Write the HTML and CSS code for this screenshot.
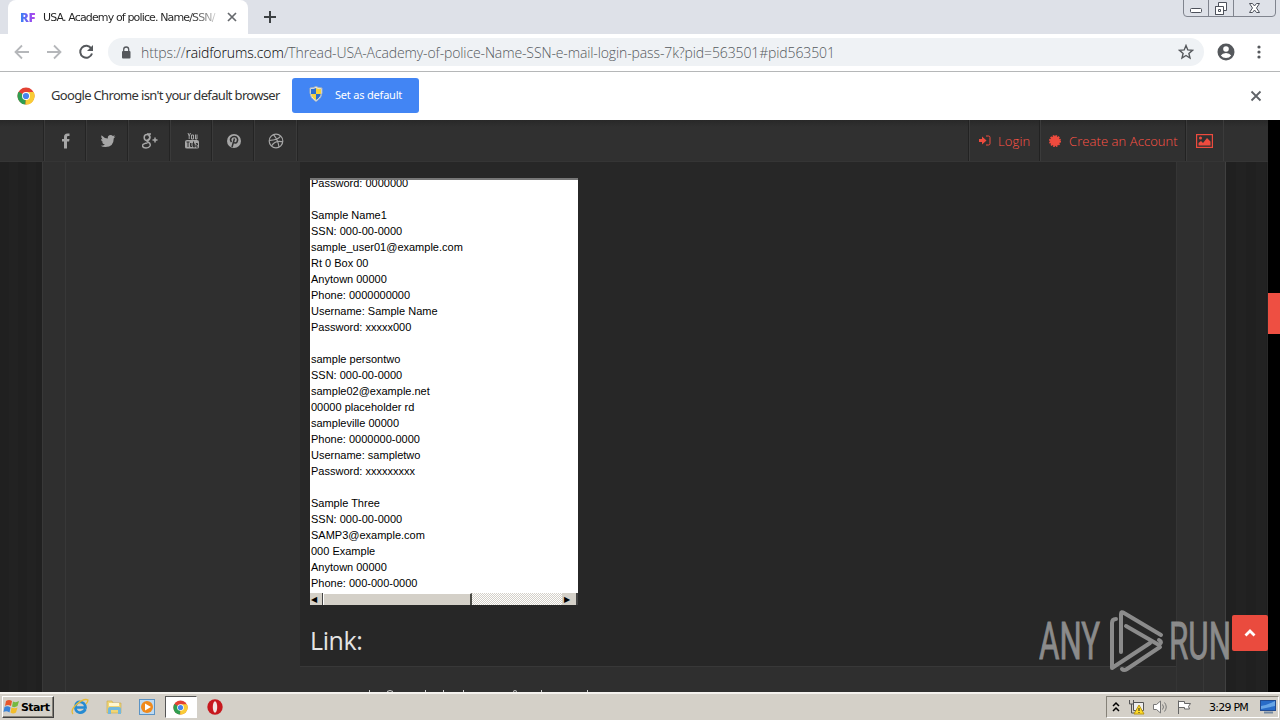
FILE: index.html
```html
<!DOCTYPE html>
<html lang="en">
<head>
<meta charset="utf-8">
<title>Browser window</title>
<link rel="stylesheet" href="styles.css">
</head>
<body>
<div class="screen">
  <header class="tabstrip">
    <div class="tab">
      <b class="favicon">RF</b><span class="tab-title">USA. Academy of police. Name/SSN/</span>
      <svg class="tab-close" width="10" height="10" viewBox="0 0 10 10"><path d="M1 1l8 8M9 1L1 9" stroke="#66696d" stroke-width="1.700"/></svg>
    </div>
    <svg class="newtab" width="12" height="12" viewBox="0 0 12 12"><path d="M6 0v12M0 6h12" stroke="#3c4043" stroke-width="2"/></svg>
    <svg class="winctl" width="94" height="18" viewBox="0 0 94 18" fill="none" stroke="#80848e">
      <path d="M.5 0v13q0 3.500 3.500 3.500h85q3.500 0 3.500-3.500V0M25.500 0v16M50.500 0v16"/>
      <g stroke="#4d515b"><rect x="7.500" y="8.500" width="11" height="4" rx="1" fill="#fff"/><path d="M35.500 2.500h8v8h-3v4h-8v-8h3z" fill="#fff"/><path d="M32.500 6.500h8v8h-8z" fill="#fff"/><path d="M35.500 9.500h2v2h-2z"/><path d="M66.500 3.500h3l2 2.500 2-2.500h3L73.500 8l3 4.500h-3l-2-2.500-2 2.500h-3l3-4.500z" fill="#fff"/></g>
    </svg>
  </header>
  <div class="toolbar">
    <svg class="nav" width="100" height="20" viewBox="0 0 100 20" fill="none" stroke-width="1.800">
      <path d="M29 10H16M22 3.500L15.500 10l6.500 6.500" stroke="#b5b7ba"/><path d="M47 10h13M54 3.500l6.500 6.500-6.500 6.500" stroke="#b5b7ba"/>
      <path d="M91.300 6.500A6 6 0 1 0 92 11.500" stroke="#55585c" stroke-width="2"/><path d="M93 3v6h-6z" fill="#55585c"/>
    </svg>
    <div class="omnibox">
      <svg width="10" height="13" viewBox="0 0 10 13"><rect x="1" y="5" width="8.500" height="7.500" rx="1" fill="#55585c"/><path d="M2.700 5.500V3.500a2.500 2.500 0 0 1 5 0v2" fill="none" stroke="#55585c" stroke-width="1.300"/></svg>
      <span class="url">https://<span class="host">raidforums.com</span>/Thread-USA-Academy-of-police-Name-SSN-e-mail-login-pass-7k?pid=563501#pid563501</span>
      <svg class="star" width="16" height="16" viewBox="0 0 16 16"><path d="M8 1.500l1.800 4.400 4.700.4-3.600 3.100 1.100 4.600L8 11.500 4 14l1.100-4.600-3.600-3.100 4.700-.4z" fill="none" stroke="#55585c" stroke-width="1.400"/></svg>
    </div>
    <svg class="avatar" width="18" height="18" viewBox="0 0 18 18"><circle cx="9" cy="9" r="8.500" fill="#55585c"/><circle cx="9" cy="6" r="2.800" fill="#fff"/><path d="M3.800 12.500q1.500-2.500 5.200-2.500t5.200 2.500Q12.300 15 9 15t-5.200-2.500z" fill="#fff"/></svg>
    <svg class="dots" width="4" height="16" viewBox="0 0 4 16" fill="#55585c"><circle cx="2" cy="3" r="1.600"/><circle cx="2" cy="8" r="1.600"/><circle cx="2" cy="13" r="1.600"/></svg>
  </div>
  <div class="infobar">
    <svg class="chrome" viewBox="0 0 18 18"><use href="#chrome"/></svg>
    <span class="info-text">Google Chrome isn't your default browser</span>
    <div class="default-btn">
      <svg width="14" height="16" viewBox="0 0 14 16"><path d="M7 .5q3 1.500 6 1.500v5q0 5-6 8.500Q1 12 1 7V2q3 0 6-1.500z" fill="#eee" stroke="#a8b3bc"/><path d="M7 2v6H2V3q3 0 5-1z" fill="#2b6fd0"/><path d="M7 2v6h5V3q-3 0-5-1zM2.200 8H7v6Q2.700 11.500 2.200 8z" fill="#f6d13a"/><path d="M7 8h4.800Q11.300 11.500 7 14z" fill="#2b6fd0"/></svg>
      <span>Set as default</span>
    </div>
    <svg class="info-close" width="12" height="12" viewBox="0 0 12 12"><path d="M1.500 1.500l9 9M10.500 1.500l-9 9" stroke="#5f6368" stroke-width="1.800"/></svg>
  </div>
  <main class="page">
    <div class="site">
      <nav class="sitebar">
        <div class="socials">
          <i><svg viewBox="0 0 16 16"><path d="M11.500.5V3H10q-1 0-1 1v2h2.500l-.4 2.500H9V15.500H6V8.500H4V6h2V4Q6 .5 9.500.5z"/></svg></i>
          <i><svg viewBox="0 0 16 16"><path d="M15.500 3.500l-1.700 1.700Q13.700 14 5.500 14 2.500 14 .7 12.700q2.500.1 4.200-1.200-2.200-.3-2.900-2.200h1.300Q1 8.300 1 6l1.400.4Q.4 4.700 1.500 2.300q2.600 3 6.300 3.200Q7.500 2 10.700 2q1.200 0 2.200 1l2-.8-1.200 1.700z"/></svg></i>
          <i><svg viewBox="0 0 16 16" fill="none" stroke="currentColor" stroke-width="1.500"><ellipse cx="5" cy="4.500" rx="2.800" ry="3"/><path d="M5 1h4M7 2q2 3-1 5-2 1 0 2 3 1.500 2 4-1 2-4 2-3.500 0-3.500-2.200T5.500 10M13 4.500v5M10.500 7h5"/></svg></i>
          <i><svg viewBox="0 0 16 16"><path d="M3 7h10q2 0 2 2v5q0 1.500-2 1.500H3q-2 0-2-1.500V9q0-2 2-2z"/><path d="M4 0l1.200 3v3M6.500 0L5.200 3M7.500 2h2v4h-2zM11.500 1.500V6H13V1.500" fill="none" stroke="currentColor"/><path d="M2.500 9h3M4 9v5M6.500 10v3.500H8V10M9.500 8.500V14h1.200v-3.500M12 10.500h1.500V12H12v2h2" fill="none" stroke="#303030"/></svg></i>
          <i><svg viewBox="0 0 16 16"><circle cx="8" cy="8" r="7"/><path d="M5.500 9Q3.500 6.500 5.500 4.500 8 2.800 10.500 4.200q2 2 .5 4.800-1.500 2-3.400.3M8.500 5.500L6 14" fill="none" stroke="#303030" stroke-width="1.500"/></svg></i>
          <i><svg viewBox="0 0 16 16" fill="none" stroke="currentColor" stroke-width="1.200"><circle cx="8" cy="8" r="6.800"/><path d="M5.500 1.700Q10 7 11 14M1.200 7.300Q9 7.500 12.700 3.200M3.500 13Q7 7 14.800 8.800"/></svg></i>
        </div>
        <div class="account">
          <a><svg width="13" height="11" viewBox="0 0 13 11"><path d="M1 4h3V1.500L8.500 5.500 4 9.500V7H1z" fill="#ee4b3e"/><path d="M8 1h2.500q1.500 0 1.500 1.500v6q0 1.500-1.500 1.500H8" fill="none" stroke="#ee4b3e"/></svg><span class="t-login">Login</span></a>
          <a><svg width="12" height="12" viewBox="0 0 12 12"><circle cx="6" cy="6" r="5" fill="#ee4b3e"/><circle cx="6" cy="6" r="5" fill="none" stroke="#ee4b3e" stroke-width="2" stroke-dasharray="1.600 1"/></svg><span class="t-create">Create an Account</span></a>
          <a><svg width="17" height="14" viewBox="0 0 17 14"><rect x=".6" y=".6" width="15.800" height="12.800" fill="none" stroke="#ee4b3e" stroke-width="1.200"/><circle cx="4.500" cy="4" r="1.500" fill="#ee4b3e"/><path d="M2.500 11.500V9L5 7l2 2 4-5 3.500 3.500v4z" fill="#ee4b3e"/></svg></a>
        </div>
      </nav>
      <div class="columns">
        <div class="edge"></div><div class="gutter"></div><div class="author"></div>
        <section class="thread">
          <article class="post">
            <div class="pane">
              <div class="lines">Password: 0000000

Sample Name1
SSN: 000-00-0000
sample_user01@example.com
Rt 0 Box 00
Anytown 00000
Phone: 0000000000
Username: Sample Name
Password: xxxxx000

sample persontwo
SSN: 000-00-0000
sample02@example.net
00000 placeholder rd
sampleville 00000
Phone: 0000000-0000
Username: sampletwo
Password: xxxxxxxxx

Sample Three
SSN: 000-00-0000
SAMP3@example.com
000 Example
Anytown 00000
Phone: 000-000-0000</div>
              <div class="hscroll"><b>◀</b><div class="thumb"></div><div class="track"></div><b>▶</b></div>
            </div>
            <h2>Link:</h2>
          </article>
          <svg class="cut" width="240" height="3" viewBox="0 0 240 3" fill="none" stroke="#d0d0d0"><path d="M9.500 1v2M27 2.500q3-2 6 0M65.500 1v2M83.500 1v2M103.500 1v2M153 2.500q2-2 4 0M181.500 1v2M227.500 1v2"/></svg>
        </section>
        <div class="right1"></div><div class="right2"></div><div class="edge-r"></div>
      </div>
      <svg class="watermark" width="196" height="66" viewBox="0 0 196 66">
        <g fill="#8b8b8b" stroke="#8b8b8b" stroke-width=".9" font-family="Roboto, sans-serif" font-size="51"><text x="0" y="50" textLength="61" lengthAdjust="spacingAndGlyphs">ANY</text><text x="130" y="50" textLength="62" lengthAdjust="spacingAndGlyphs">RUN</text></g>
        <g fill="none" stroke="#8b8b8b" stroke-width="4" stroke-linejoin="round" stroke-linecap="round"><path d="M77 10q-4 0-4 4v45l38-25M82 43V5q0-3 3-1l37 22M87 17l33 19q4-3 0-5M83 60q2 2 5 0l33-22"/></g>
      </svg>
      <div class="totop"><svg width="12" height="8" viewBox="0 0 12 8"><path d="M1.500 6.500L6 2l4.500 4.500" fill="none" stroke="#fff" stroke-width="2.800"/></svg></div>
    </div>
    <div class="scroll"><div class="scroll-thumb"></div></div>
  </main>
  <footer class="taskbar">
    <div class="start"><svg width="17" height="16" viewBox="0 0 17 16"><path d="M3 2q3-2 6 0L8 7Q5 5 2 7z" fill="#e8562a"/><path d="M10 2.500q3 1.500 6-.5l-1.500 5q-3 2-5.500.5z" fill="#75b942"/><path d="M1.500 8q3-1.500 6 .5l-1 5q-3-2-6-.5z" fill="#3a83d8"/><path d="M8.500 8.500q3 1.500 6 0l-1.500 5q-3 2-5.500 0z" fill="#f2bd2c"/></svg><span>Start</span></div>
    <div class="quick">
      <svg viewBox="0 0 18 18"><path d="M14.500 11Q12 15.500 8 14.500T4.500 8.500 9.500 4t5 5.500H5" fill="none" stroke="#268bd2" stroke-width="2.700"/><path d="M2 16Q-1 12 6 6t11-4q0 2-2 4" fill="none" stroke="#e7bb36" stroke-width="1.300"/></svg>
      <svg viewBox="0 0 18 18"><path d="M2 3h5l1 2h8v10H2z" fill="#f0d575" stroke="#c7a94c" stroke-width=".6"/><path d="M4 5h10v3H4z" fill="#fff7cf"/><path d="M3 16v-5q0-2 2-2h9q2 0 2 2v5h-3v-4H6v4z" fill="#72b8dc"/></svg>
      <svg viewBox="0 0 18 18"><rect x="1.500" y="1.500" width="15" height="15" fill="#bddaf2" stroke="#5b93c4"/><circle cx="9" cy="9" r="6" fill="#f08a1c"/><path d="M7 5.500l6 3.500-6 3.500z" fill="#fff"/></svg>
      <div class="active"><svg viewBox="0 0 18 18"><g id="chrome"><circle cx="9" cy="9" r="8.500" fill="#e34133"/><path d="M9 9L1.600 4.800A8.500 8.500 0 0 0 8.500 17.500z" fill="#2f9e50"/><path d="M9 9L8.500 17.500A8.500 8.500 0 0 0 16.600 5H9z" fill="#f9cc35"/><circle cx="9" cy="9" r="4" fill="#fff"/><circle cx="9" cy="9" r="3.100" fill="#4685ed"/></g></svg></div>
      <svg viewBox="0 0 18 18"><circle cx="9" cy="9" r="7.700" fill="#c7181e"/><ellipse cx="9" cy="9" rx="2.200" ry="5.800" fill="#f2e6e3"/></svg>
    </div>
    <div class="tray">
      <svg width="8" height="12" viewBox="0 0 8 12" fill="none" stroke="#000" stroke-width="1.500"><path d="M1 5l3-3 3 3M1 10l3-3 3 3"/></svg>
      <svg width="17" height="16" viewBox="0 0 17 16"><path d="M5.500 3.500h10v8h-10z" fill="#eee" stroke="#555"/><path d="M1.500 1v4h4V1M3.500 5v9h5" fill="none" stroke="#555"/><path d="M11 6l5 9H6z" fill="#ffdc27" stroke="#b99716"/><path d="M11 9v3M11 13v1" stroke="#222"/></svg>
      <svg width="17" height="16" viewBox="0 0 17 16" fill="none" stroke="#777"><path d="M1.500 5.500h3L8.500 2v12l-4-3.500h-3z" fill="#fff"/><path d="M10.500 5.500q2 2.500 0 5M12.500 3.500q3.500 4.500 0 9"/></svg>
      <svg width="17" height="16" viewBox="0 0 17 16" fill="#fff" stroke="#666"><path d="M2.500 15V1.500M2.500 2.500h6v2h6l-2 3 1 2.500h-5V8.500h-6"/></svg>
      <span class="clock">3:29 PM</span>
      <svg class="desk" width="16" height="14" viewBox="0 0 16 14"><rect x=".5" y=".5" width="15" height="10" fill="#286cc8" stroke="#234c91"/><path d="M1 6Q8 5 15 1v5L1 9z" fill="#68a6e6"/><path d="M4 12.500h9" stroke="#7388a0" stroke-width="2"/></svg>
    </div>
  </footer>
</div>
</body>
</html>
```
FILE: styles.css
```css
* { box-sizing: border-box; }
body { margin: 0; }
svg { display: block; flex: none; }
.screen { width: 1280px; height: 720px; display: flex; flex-direction: column; overflow: hidden; background: #fff; font-family: "Noto Sans", sans-serif; }
.tabstrip { height: 34px; flex: none; background: #dee1e8; display: flex; align-items: flex-start; }
.tab { width: 240px; height: 34px; margin-left: 8px; padding: 0 11px 0 12px; background: #fff; border-radius: 8px 8px 0 0; display: flex; align-items: center; }
.favicon { width: 23px; font: 800 13px "Open Sans", sans-serif; letter-spacing: -.4px; color: transparent; background: linear-gradient(90deg, #2f86f6, #8d4ff0 45%, #c44be8 75%); background-clip: text; -webkit-background-clip: text; }
.tab-title { width: 176px; white-space: nowrap; font: 11px "DejaVu Sans", sans-serif; letter-spacing: -.86px; color: transparent; background: linear-gradient(90deg, #222 84%, #ccc 98%); background-clip: text; -webkit-background-clip: text; }
.tab-close { margin-left: 8px; }
.newtab { margin: 11px 0 0 16px; }
.winctl { margin-left: auto; margin-right: 3px; }
.toolbar { height: 38px; flex: none; border-bottom: 1px solid #b5b7b8; display: flex; align-items: center; padding-bottom: 1px; }
.nav { margin-right: 8px; }
.omnibox { width: 1096px; height: 28px; padding: 0 10px 0 13px; border-radius: 14px; background: #eff2f5; display: flex; align-items: center; }
.url { margin-left: 10px; font: 300 14px "Open Sans", sans-serif; letter-spacing: -.12px; color: #55595d; white-space: nowrap; }
.host { color: #000; }
.star { margin-left: auto; }
.avatar { margin-left: 13px; }
.dots { margin-left: 22px; }
.infobar { height: 48px; flex: none; display: flex; align-items: center; padding: 0 18px 0 17px; }
.chrome { width: 18px; height: 18px; }
.info-text { width: 241px; margin: -2px 0 0 16px; font-size: 13px; letter-spacing: -.67px; color: #333; white-space: nowrap; }
.default-btn { width: 127px; height: 35px; margin-top: -2px; padding: 0 0 2px 17px; border-radius: 3px; background: #4285f4; color: #fff; display: flex; align-items: center; gap: 12px; font-size: 11px; letter-spacing: -.2px; white-space: nowrap; }
.info-close { margin-left: auto; }
.page { height: 572px; flex: none; display: flex; }
.site { width: 1268px; position: relative; display: flex; flex-direction: column; }
.sitebar { height: 42px; background: linear-gradient(#282828, #303030 7px); border-bottom: 1px solid #353535; display: flex; justify-content: space-between; padding: 0 44px; }
.socials, .account { display: flex; }
.socials { border-right: 1px solid #3a3a3a; box-shadow: 1px 0 #252525; }
.socials i { width: 42px; display: grid; place-items: center; border-left: 1px solid #3a3a3a; box-shadow: -1px 0 #242424; color: #a6a6a6; }
.socials svg { width: 16px; height: 16px; fill: currentColor; }
.socials svg[fill="none"] { fill: none; }
.account { border-right: 1px solid #3b3b3b; }
.account a { display: flex; align-items: center; padding: 0 8px; gap: 8px; border-left: 1px solid #3b3b3b; box-shadow: -1px 0 #222; color: #ff5346; font: 300 13px "Open Sans", sans-serif; white-space: nowrap; }
.account a:first-child { gap: 7px; }
.account a:last-child { padding: 0 10px 0 9px; }
.t-login { width: 34px; letter-spacing: .15px; }
.t-create { width: 109px; letter-spacing: .08px; }
.columns { flex: 1; min-height: 0; display: flex; background: #2f2f2f; }
.edge { width: 43px; border-right: 1px solid #383838; background: repeating-linear-gradient(90deg, #202020 0 9px, #222 9px 18px); }
.gutter { width: 23px; border-right: 1px solid #383838; }
.author { width: 234px; }
.thread { width: 876px; height: 530px; overflow: hidden; }
.post { height: 505px; padding: 16px 10px 0; background: #272727; border-bottom: 1px solid #383838; }
.pane { width: 268px; height: 427px; background: #fff; border-top: 2px solid #777; overflow: hidden; display: flex; flex-direction: column; }
.lines { height: 418px; margin-top: -5px; padding-left: 1px; flex: none; white-space: pre; overflow: hidden; font: 11px/16px "Liberation Sans", sans-serif; color: #000; }
.hscroll { height: 12px; flex: none; display: flex; background: #d4d0c8; font: 8px/14px "DejaVu Sans", sans-serif; }
.hscroll b { width: 13px; padding-right: 4px; text-align: center; border-right: 1px solid #444; }
.hscroll b:last-child { width: 16px; border-right: 2px solid #444; }
.thumb { width: 149px; background: #d4d0c8; border-top: 1px solid #fff; border-left: 1px solid #fff; border-right: 2px solid #4a4a45; }
.track { flex: 1; background: repeating-conic-gradient(#fff 0 25%, #d4d0c8 0 50%) 0 0 / 2px 2px; }
.post h2 { margin: 17px 0 0; font: 400 25px/36px "Open Sans", sans-serif; letter-spacing: -.4px; color: #e4e4e4; }
.cut { margin: 22px 0 0 60px; }
.right1 { width: 28px; border-left: 1px solid #353535; border-right: 1px solid #383838; }
.right2 { width: 22px; border-right: 1px solid #404040; }
.edge-r { width: 42px; background: repeating-linear-gradient(90deg, #202020 0 10px, #222 10px 20px); border-right: 1px solid #292929; }
.watermark { position: absolute; left: 1039px; top: 489px; }
.totop { position: absolute; left: 1232px; top: 495px; width: 36px; height: 36px; border-radius: 2px; background: #ea4b3e; display: grid; place-items: center; }
.scroll { width: 12px; background: #000; padding-top: 173px; }
.scroll-thumb { height: 41px; background: #ee4f42; }
.taskbar { height: 28px; flex: none; background: #d4d0c8; border-top: 2px solid #f4f2ee; display: flex; align-items: center; }
.start { width: 52px; height: 22px; margin-left: 2px; display: flex; align-items: center; gap: 1px; border: 1px solid; border-color: #fff #404040 #404040 #fff; box-shadow: inset -1px -1px #858178; font: bold 11px "DejaVu Sans", sans-serif; letter-spacing: -.6px; }
.quick { display: flex; align-items: center; margin-left: 17px; }
.quick > svg { width: 18px; height: 18px; margin-right: 15.500px; }
.active { width: 32px; height: 22px; margin-left: -7px; margin-right: 9px; background: #fff; border: 1px solid; border-color: #555 #fff #fff #555; display: grid; place-items: center; }
.active svg { width: 15px; height: 15px; }
.tray { width: 173px; height: 22px; margin-left: auto; margin-right: 1px; padding-left: 5px; border: 1px solid; border-color: #858178 #fff #fff #858178; display: flex; align-items: center; }
.tray svg + svg { margin-left: 7px; }
.tray svg:first-child { margin-right: 1px; }
.clock { width: 43px; margin-left: 16px; font: 11px "DejaVu Sans", sans-serif; letter-spacing: -.75px; white-space: nowrap; }
.desk { margin-left: 8px; }
```
